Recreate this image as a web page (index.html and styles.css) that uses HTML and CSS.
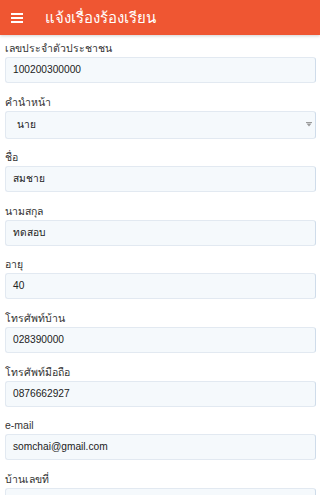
FILE: index.html
```html
<!DOCTYPE html>
<html lang="th">
<head>
<meta charset="utf-8">
<title>แจ้งเรื่องร้องเรียน</title>
<link rel="stylesheet" href="styles.css">
</head>
<body>
<header class="bar">
  <svg class="menu" width="12" height="10" viewBox="0 0 12 10"><rect x="0" y="0" width="12" height="2" fill="#fff"/><rect x="0" y="4" width="12" height="2" fill="#fff"/><rect x="0" y="8" width="12" height="2" fill="#fff"/></svg>
  <h1 class="title">แจ้งเรื่องร้องเรียน</h1>
</header>
<main class="form">
  <div class="field"><label class="label">เลขประจำตัวประชาชน</label><div class="input">100200300000</div></div>
  <div class="field"><label class="label">คำนำหน้า</label><div class="input select"><span class="sel-text">นาย</span><svg class="caret" width="6" height="5" viewBox="0 0 6 5"><rect x="0" y="0" width="6" height="1" fill="#9a9a9a"/><path d="M0.5 1.5 H5.5 L3 4.5 Z" fill="#9a9a9a"/></svg></div></div>
  <div class="field"><label class="label">ชื่อ</label><div class="input">สมชาย</div></div>
  <div class="field"><label class="label">นามสกุล</label><div class="input">ทดสอบ</div></div>
  <div class="field"><label class="label">อายุ</label><div class="input">40</div></div>
  <div class="field"><label class="label">โทรศัพท์บ้าน</label><div class="input">028390000</div></div>
  <div class="field"><label class="label">โทรศัพท์มือถือ</label><div class="input">0876662927</div></div>
  <div class="field"><label class="label">e-mail</label><div class="input">somchai@gmail.com</div></div>
  <div class="field"><label class="label">บ้านเลขที่</label><div class="input"></div></div>
</main>
</body>
</html>
```
FILE: styles.css
```css
html, body {
  margin: 0;
  padding: 0;
  background: #ffffff;
  font-family: "Liberation Sans", Arial, sans-serif;
  color: #333333;
  overflow: hidden;
}
.bar {
  height: 35px;
  background: #ef5632;
  display: flex;
  align-items: center;
  box-shadow: 0 1px 3px rgba(0,0,0,0.18);
  position: relative;
  z-index: 1;
}
.menu {
  margin-left: 11px;
  flex: none;
}
.title {
  margin: 0 0 0 22px;
  font-size: 15px;
  font-weight: normal;
  color: #ffffff;
  line-height: 35px;
}
.form {
  padding: 6px 4px 0 5px;
  display: flex;
  flex-direction: column;
}
.field {
  display: flex;
  flex-direction: column;
  margin-bottom: 11.6px;
}
.label {
  font-size: 10.5px;
  line-height: 14px;
  color: #333333;
  margin-bottom: 2px;
}
.input {
  height: 24px;
  border: 1px solid #e2e9f1;
  border-right-color: #cfdcea;
  border-radius: 3px;
  background: #f5f9fc;
  padding: 0 7px;
  font-size: 10.2px;
  line-height: 24px;
  color: #222222;
  display: flex;
  align-items: center;
}
.select {
  height: 26px;
  justify-content: space-between;
  padding: 0 3px 0 11px;
}
.caret {
  flex: none;
}
```
